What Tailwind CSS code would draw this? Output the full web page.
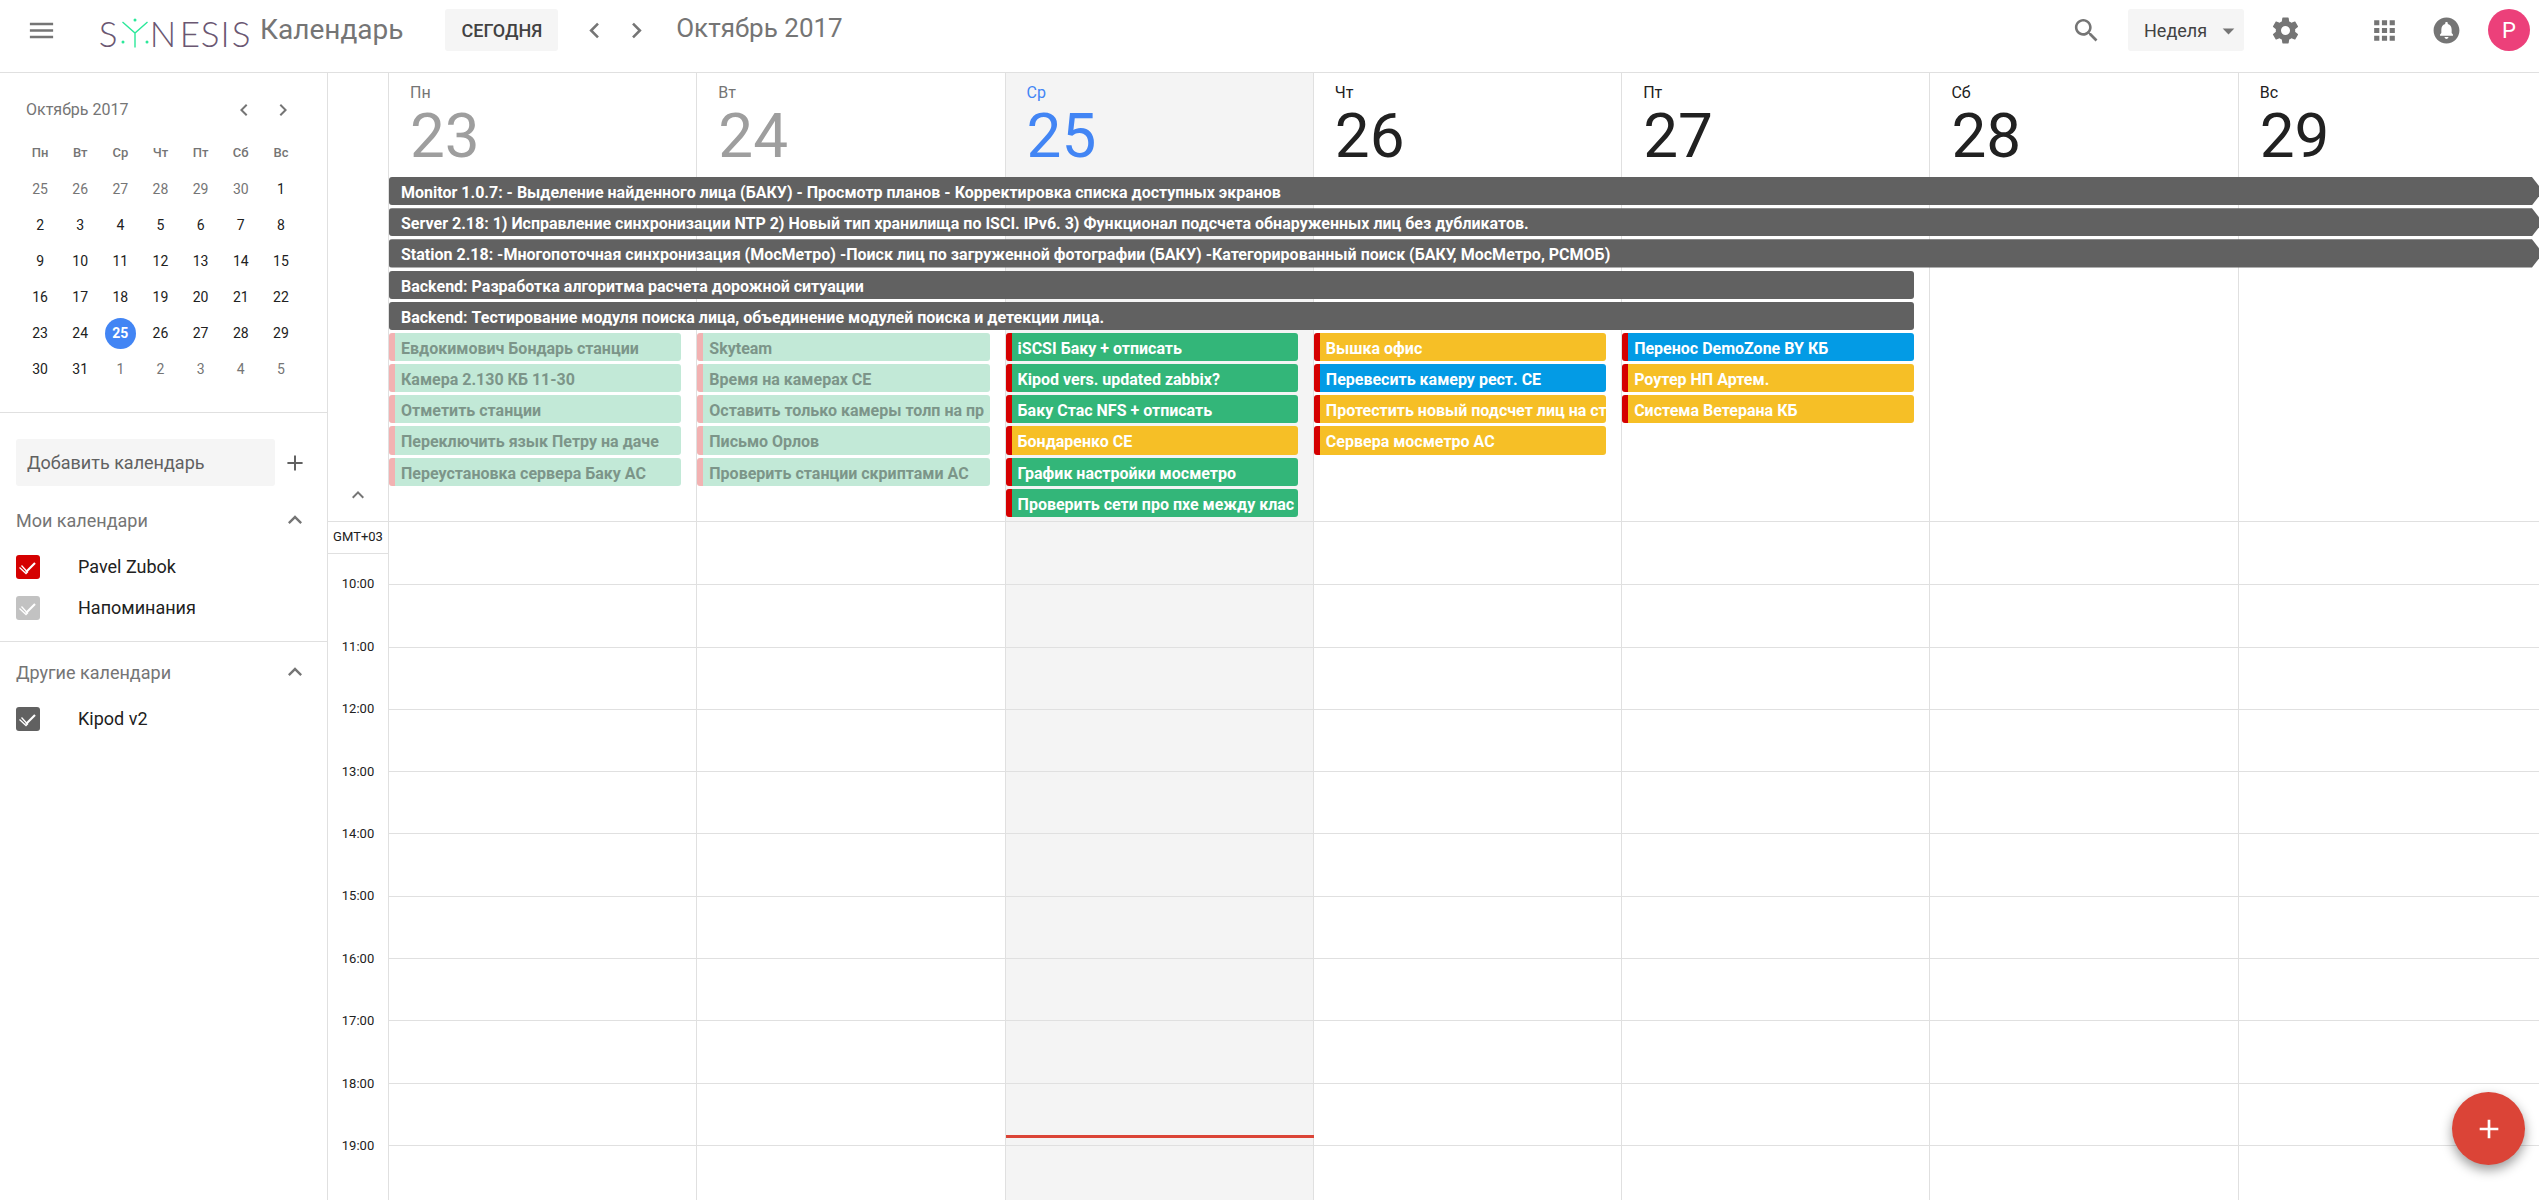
<!DOCTYPE html>
<html lang="ru">
<head>
    <meta charset="UTF-8">
    <meta name="viewport" content="width=device-width, initial-scale=1.0">
    <title>Synesis Календарь</title>
    <script src="https://cdn.jsdelivr.net/npm/@tailwindcss/browser@4"></script>
</head>
<body class="bg-white font-[Roboto,sans-serif] text-[#212121]">
    <div class="flex h-screen flex-col overflow-hidden">
        <!-- Header -->
        <header class="flex h-[73px] shrink-0 items-start border-b border-[#e0e0e0] pt-[9px] pr-[9px] text-[#757575]">
            <button aria-label="Меню" class="ml-[26px] flex h-[42px] items-center">
                <svg class="size-[31px]" viewBox="0 0 24 24" fill="currentColor"><path d="M3 18h18v-2H3v2zm0-5h18v-2H3v2zm0-7v2h18V6H3z"/></svg>
            </button>
            <a href="#" class="ml-[38px] flex h-[42px] items-center">
                <svg class="h-[42px] w-[156px] overflow-visible" viewBox="0 0 156 42" role="img" aria-label="Synesis">
                    <g fill="#6a5772" font-family="Lato, sans-serif" font-weight="300" font-size="35" text-anchor="middle">
                        <text x="13" y="38">S</text>
                        <text x="68" y="38">N</text>
                        <text x="95" y="38">E</text>
                        <text x="115" y="38">S</text>
                        <text x="130" y="38">I</text>
                        <text x="146" y="38">S</text>
                    </g>
                    <path d="M27.500 13L40 24l12.500-11M40 24v14.500" fill="none" stroke="#2be89a" stroke-width="1.4"/>
                    <g fill="#2be89a"><circle cx="40" cy="11" r="1.5"/><circle cx="28" cy="33" r="1.5"/><circle cx="52" cy="33" r="1.5"/></g>
                </svg>
                <span class="ml-[9px] text-[28px] leading-[42px]">Календарь</span>
            </a>
            <button class="ml-[42px] h-[42px] rounded-[3px] bg-[#f5f5f5] px-4 text-[18px] font-medium text-[#424242]">СЕГОДНЯ</button>
            <button aria-label="Предыдущая неделя" class="ml-[21px] flex h-[42px] items-center">
                <svg class="size-[31px]" viewBox="0 0 24 24" fill="currentColor"><path d="M15.41 7.41L14 6l-6 6 6 6 1.41-1.41L10.83 12z"/></svg>
            </button>
            <button aria-label="Следующая неделя" class="ml-[11px] flex h-[42px] items-center">
                <svg class="size-[31px]" viewBox="0 0 24 24" fill="currentColor"><path d="M10 6L8.59 7.41 13.17 12l-4.58 4.59L10 18l6-6z"/></svg>
            </button>
            <h1 class="ml-6 text-[26px] leading-[38px]">Октябрь 2017</h1>

            <div class="ml-auto flex items-center">
                <button aria-label="Поиск">
                    <svg class="size-[31px]" viewBox="0 0 24 24" fill="currentColor"><path d="M15.5 14h-.79l-.28-.27C15.41 12.59 16 11.11 16 9.5 16 5.91 13.09 3 9.5 3S3 5.91 3 9.5 5.91 16 9.5 16c1.61 0 3.09-.59 4.23-1.57l.27.28v.79l5 4.99L20.49 19l-4.99-5zm-6 0C7.01 14 5 11.99 5 9.5S7.01 5 9.5 5 14 7.01 14 9.5 11.99 14 9.5 14z"/></svg>
                </button>
                <div class="relative ml-[26px]">
                    <select aria-label="Вид" class="h-[42px] w-[116px] appearance-none rounded-[3px] bg-[#f5f5f5] pl-4 text-[18px] text-[#424242]">
                        <option>Неделя</option>
                    </select>
                    <svg class="pointer-events-none absolute top-[6px] right-0 size-[31px]" viewBox="0 0 24 24" fill="currentColor"><path d="M7.5 10.5l4.5 4.5 4.5-4.5z"/></svg>
                </div>
                <button aria-label="Настройки" class="ml-[26px]">
                    <svg class="size-[31px]" viewBox="0 0 24 24" fill="currentColor"><path d="M19.43 12.98c.04-.32.07-.64.07-.98s-.03-.66-.07-.98l2.11-1.65c.19-.15.24-.42.12-.64l-2-3.46c-.12-.22-.39-.3-.61-.22l-2.49 1c-.52-.4-1.08-.73-1.69-.98l-.38-2.65C14.46 2.18 14.25 2 14 2h-4c-.25 0-.46.18-.49.42l-.38 2.65c-.61.25-1.17.59-1.69.98l-2.49-1c-.23-.09-.49 0-.61.22l-2 3.46c-.13.22-.07.49.12.64l2.11 1.65c-.04.32-.07.65-.07.98s.03.66.07.98l-2.11 1.65c-.19.15-.24.42-.12.64l2 3.46c.12.22.39.3.61.22l2.49-1c.52.4 1.08.73 1.69.98l.38 2.65c.03.24.24.42.49.42h4c.25 0 .46-.18.49-.42l.38-2.65c.61-.25 1.17-.59 1.69-.98l2.49 1c.23.09.49 0 .61-.22l2-3.46c.12-.22.07-.49-.12-.64l-2.11-1.65zM12 15.5c-1.93 0-3.5-1.57-3.5-3.5s1.57-3.5 3.5-3.5 3.5 1.57 3.5 3.5-1.57 3.5-3.5 3.5z"/></svg>
                </button>
                <button aria-label="Приложения" class="ml-[68px]">
                    <svg class="size-[31px]" viewBox="0 0 24 24" fill="currentColor"><path d="M4 8h4V4H4v4zm6 12h4v-4h-4v4zm-6 0h4v-4H4v4zm0-6h4v-4H4v4zm6 0h4v-4h-4v4zm6-10v4h4V4h-4zm-6 4h4V4h-4v4zm6 6h4v-4h-4v4zm0 6h4v-4h-4v4z"/></svg>
                </button>
                <button aria-label="Уведомления" class="ml-[31px]">
                    <svg class="size-[31px]" viewBox="0 0 24 24" fill="currentColor"><path d="M12 2C6.480 2 2 6.480 2 12s4.480 10 10 10 10-4.480 10-10S17.520 2 12 2zm0 16.500c-.83 0-1.500-.67-1.500-1.500h3c0 .83-.67 1.500-1.500 1.500zm5-2.500H7v-1l1-1v-2.610C8 9.270 9.030 7.470 11 7v-.500c0-.57.430-1 1-1s1 .430 1 1V7c1.970.470 3 2.280 3 4.390V14l1 1v1z"/></svg>
                </button>
                <button aria-label="Аккаунт" class="ml-[26px] size-[42px] rounded-full bg-[#ec407a] text-[22px] text-white">P</button>
            </div>
        </header>

        <div class="flex min-h-0 flex-1">
            <!-- Sidebar -->
            <aside class="w-[328px] shrink-0 border-r border-[#e0e0e0] text-[18px]">
                <div class="h-[340px] border-b border-[#e0e0e0] pt-[21px]">
                    <div class="flex h-[31px] items-center pr-8 pl-[26px] text-[#757575]">
                        <h2 class="text-[16px]">Октябрь 2017</h2>
                        <button aria-label="Предыдущий месяц" class="ml-auto">
                            <svg class="size-6" viewBox="0 0 24 24" fill="currentColor"><path d="M15.41 7.41L14 6l-6 6 6 6 1.41-1.41L10.83 12z"/></svg>
                        </button>
                        <button aria-label="Следующий месяц" class="ml-[15px]">
                            <svg class="size-6" viewBox="0 0 24 24" fill="currentColor"><path d="M10 6L8.59 7.41 13.17 12l-4.58 4.59L10 18l6-6z"/></svg>
                        </button>
                    </div>
                    <table class="mt-[10px] ml-5 w-[281px] table-fixed text-center text-[14px]">
                        <thead id="miniHead" class="text-[13px] text-[#757575]"></thead>
                        <tbody id="miniBody"></tbody>
                    </table>
                </div>

                <div class="border-b border-[#e0e0e0] pt-[26px] pb-[13px]">
                    <div class="flex items-center pr-[18px] pl-4">
                        <input type="text" aria-label="Добавить календарь" placeholder="Добавить календарь" class="h-[47px] w-[259px] rounded-[3px] bg-[#f5f5f5] px-[11px] text-[18px] placeholder:text-[#616161]">
                        <button aria-label="Добавить" class="ml-auto text-[#616161]">
                            <svg class="size-7" viewBox="0 0 24 24" fill="none" stroke="currentColor" stroke-width="1.700"><path d="M12 5.500v13M5.500 12h13"/></svg>
                        </button>
                    </div>
                    <div class="mt-[22px] flex h-6 items-center pr-[18px] pl-4 text-[#757575]">
                        <h3>Мои календари</h3>
                        <button aria-label="Свернуть" class="ml-auto">
                            <svg class="size-7" viewBox="0 0 24 24" fill="currentColor"><path d="M12 8l-6 6 1.41 1.41L12 10.83l4.59 4.58L18 14z"/></svg>
                        </button>
                    </div>
                    <label class="mt-[14px] flex h-[41px] items-center pl-4">
                        <input type="checkbox" checked class="sr-only">
                        <span class="size-6 rounded-[3px] bg-[#d50000] text-white"><svg class="size-6" viewBox="0 0 24 24" fill="none" stroke="currentColor"><path stroke-width="2.200" d="M10 17L19 8"/><path stroke-width="1.300" d="M3.500 12.500l6.500 6 2-2M5.500 10.500l5 5.500"/></svg></span>
                        <span class="ml-[38px]">Pavel Zubok</span>
                    </label>
                    <label class="flex h-[41px] items-center pl-4">
                        <input type="checkbox" checked class="sr-only">
                        <span class="size-6 rounded-[3px] bg-[#c2c2c2] text-white"><svg class="size-6" viewBox="0 0 24 24" fill="none" stroke="currentColor"><path stroke-width="2.200" d="M10 17L19 8"/><path stroke-width="1.300" d="M3.500 12.500l6.500 6 2-2M5.500 10.500l5 5.500"/></svg></span>
                        <span class="ml-[38px]">Напоминания</span>
                    </label>
                </div>

                <div class="pt-[18px]">
                    <div class="flex h-6 items-center pr-[18px] pl-4 text-[#757575]">
                        <h3>Другие календари</h3>
                        <button aria-label="Свернуть" class="ml-auto">
                            <svg class="size-7" viewBox="0 0 24 24" fill="currentColor"><path d="M12 8l-6 6 1.41 1.41L12 10.83l4.59 4.58L18 14z"/></svg>
                        </button>
                    </div>
                    <label class="mt-[14px] flex h-[41px] items-center pl-4">
                        <input type="checkbox" checked class="sr-only">
                        <span class="size-6 rounded-[3px] bg-[#616161] text-white"><svg class="size-6" viewBox="0 0 24 24" fill="none" stroke="currentColor"><path stroke-width="2.200" d="M10 17L19 8"/><path stroke-width="1.300" d="M3.500 12.500l6.500 6 2-2M5.500 10.500l5 5.500"/></svg></span>
                        <span class="ml-[38px]">Kipod v2</span>
                    </label>
                </div>
            </aside>

            <!-- Time gutter -->
            <div class="flex w-[61px] shrink-0 flex-col overflow-hidden border-r border-[#e0e0e0] text-center text-[13px]">
                <div class="flex h-[449px] shrink-0 items-end justify-center border-b border-[#e0e0e0] pb-[14px] text-[#757575]">
                    <button aria-label="Свернуть"><svg class="size-6" viewBox="0 0 24 24" fill="currentColor"><path d="M12 8l-6 6 1.41 1.41L12 10.83l4.59 4.58L18 14z"/></svg></button>
                </div>
                <div class="h-8 shrink-0 border-b border-[#e0e0e0] leading-[30px]">GMT+03</div>
                <div id="hourLabels" class="grid h-[624px] shrink-0 auto-rows-fr"></div>
            </div>

            <!-- Week -->
            <main class="grid min-w-0 flex-1 overflow-hidden">
                <!-- Day columns -->
                <div id="dayColumns" class="col-start-1 row-start-1 -mr-2 grid grid-cols-7"></div>

                <!-- All-day events and hour lines -->
                <div class="col-start-1 row-start-1 -mr-2 flex min-w-0 flex-col pt-[104px]">
                    <div class="h-[345px] shrink-0 border-b border-[#e0e0e0]">
                        <div id="allDay" class="grid h-[340px] grid-cols-7 grid-rows-11 gap-y-[3px]"></div>
                    </div>
                    <div class="relative">
                        <div id="hourLines" class="grid h-[624px] auto-rows-fr pt-px"></div>
                        <div id="nowLine" class="absolute h-[3px] bg-[#db4437]"></div>
                    </div>
                </div>
            </main>
        </div>
    </div>

    <button aria-label="Создать" class="fixed right-[14px] bottom-[35px] flex size-[73px] items-center justify-center rounded-full bg-[#db4437] text-white shadow-[0_5px_12px_rgba(0,0,0,0.4)]">
        <svg class="size-[32px]" viewBox="0 0 24 24" fill="currentColor"><path d="M19 13h-6v6h-2v-6H5v-2h6V5h2v6h6v2z"/></svg>
    </button>

    <script>
        const dayNames = ['Пн', 'Вт', 'Ср', 'Чт', 'Пт', 'Сб', 'Вс'];
        const today = 25;
        const weekStart = 23;
        const firstHour = 10;
        const hourCount = 10;
        const now = 18 + 49 / 60;

        // Events that run over several days, starting on Monday
        const longEvents = [
            { title: 'Monitor 1.0.7: - Выделение найденного лица (БАКУ) - Просмотр планов - Корректировка списка доступных экранов', days: 7 },
            { title: 'Server 2.18: 1) Исправление синхронизации NTP 2) Новый тип хранилища по ISCI. IPv6. 3) Функционал подсчета обнаруженных лиц без дубликатов.', days: 7 },
            { title: 'Station 2.18: -Многопоточная синхронизация (МосМетро) -Поиск лиц по загруженной фотографии (БАКУ) -Категорированный поиск (БАКУ, МосМетро, РСМОБ)', days: 7 },
            { title: 'Backend: Разработка алгоритма расчета дорожной ситуации', days: 5 },
            { title: 'Backend: Тестирование модуля поиска лица, объединение модулей поиска и детекции лица.', days: 5 }
        ];

        const dayEvents = [
            [['past', 'Евдокимович Бондарь станции'], ['past', 'Камера 2.130 КБ 11-30'], ['past', 'Отметить станции'], ['past', 'Переключить язык Петру на даче'], ['past', 'Переустановка сервера Баку АС']],
            [['past', 'Skyteam'], ['past', 'Время на камерах СЕ'], ['past', 'Оставить только камеры толп на пр'], ['past', 'Письмо Орлов'], ['past', 'Проверить станции скриптами АС']],
            [['green', 'iSCSI Баку + отписать'], ['green', 'Kipod vers. updated zabbix?'], ['green', 'Баку Стас NFS + отписать'], ['yellow', 'Бондаренко СЕ'], ['green', 'График настройки мосметро'], ['green', 'Проверить сети про пхе между клас']],
            [['yellow', 'Вышка офис'], ['blue', 'Перевесить камеру рест. СЕ'], ['yellow', 'Протестить новый подсчет лиц на ст'], ['yellow', 'Сервера мосметро АС']],
            [['blue', 'Перенос DemoZone BY КБ'], ['yellow', 'Роутер НП Артем.'], ['yellow', 'Система Ветерана КБ']]
        ];

        const eventColors = {
            past: 'border-[#f2b2b2] bg-[#c2e9d7] text-[#7c9589]',
            green: 'border-[#d50000] bg-[#33b679] text-white',
            yellow: 'border-[#d50000] bg-[#f6bf26] text-white',
            blue: 'border-[#d50000] bg-[#039be5] text-white'
        };

        function renderMiniCalendar() {
            document.getElementById('miniHead').innerHTML = `<tr class="h-9">${dayNames.map(d => `<th class="font-medium">${d}</th>`).join('')}</tr>`;
            let rows = '';
            for (let week = 0; week < 6; week++) {
                rows += '<tr class="h-9">';
                for (let i = 0; i < 7; i++) {
                    const n = week * 7 + i - 5;
                    const outside = n < 1 || n > 31;
                    const label = n < 1 ? 30 + n : n > 31 ? n - 31 : n;
                    if (n === today) {
                        rows += `<td><span class="mx-auto flex size-[31px] items-center justify-center rounded-full bg-[#4285f4] font-bold text-white">${label}</span></td>`;
                    } else {
                        rows += `<td class="${outside ? 'text-[#757575]' : 'text-[#212121]'}">${label}</td>`;
                    }
                }
                rows += '</tr>';
            }
            document.getElementById('miniBody').innerHTML = rows;
        }

        function renderDays() {
            document.getElementById('dayColumns').innerHTML = dayNames.map((name, i) => {
                const date = weekStart + i;
                const nameColor = date < today ? 'text-[#757575]' : date === today ? 'text-[#4285f4]' : 'text-[#212121]';
                const dateColor = date < today ? 'text-[#9e9e9e]' : date === today ? 'text-[#4285f4]' : 'text-[#212121]';
                return `
                    <div class="border-r border-[#e0e0e0] pt-[10px] pl-[21px] ${date === today ? 'bg-[#f4f4f4]' : ''}">
                        <div class="text-[16px] leading-5 ${nameColor}">${name}</div>
                        <div class="text-[62px] leading-[66px] ${dateColor}">${date}</div>
                    </div>`;
            }).join('');
        }

        function renderEvents() {
            let html = longEvents.map((e, row) => `
                <a href="#" style="grid-area: ${row + 1} / 1 / auto / span ${e.days}" class="min-w-0 overflow-hidden bg-[#616161] px-3 text-[16px] leading-8 font-bold whitespace-nowrap text-white ${e.days === 7 ? 'mr-1 rounded-l-[3px] [clip-path:polygon(0_0,calc(100%-11px)_0,100%_50%,calc(100%-11px)_100%,0_100%)]' : 'mr-4 rounded-[3px]'}">${e.title}</a>`).join('');
            dayEvents.forEach((events, day) => {
                events.forEach(([color, title], i) => {
                    html += `
                        <a href="#" style="grid-area: ${longEvents.length + i + 1} / ${day + 1}" class="mr-4 min-w-0 overflow-hidden rounded-[3px] border-l-[6px] pl-[6px] text-[16px] leading-8 font-bold whitespace-nowrap ${eventColors[color]}">${title}</a>`;
                });
            });
            document.getElementById('allDay').innerHTML = html;
        }

        function renderHours() {
            const hours = Array.from({ length: hourCount }, (_, i) => firstHour + i);
            document.getElementById('hourLabels').innerHTML = hours.map(h => `<div class="flex items-center justify-center pb-0.5">${h}:00</div>`).join('');
            document.getElementById('hourLines').innerHTML = hours.map(() => '<div class="border-b border-[#e0e0e0]"></div>').join('');

            const line = document.getElementById('nowLine');
            const day = today - weekStart;
            line.style.left = `${day / 7 * 100}%`;
            line.style.width = `${100 / 7}%`;
            line.style.top = `${(now - firstHour + 1) / hourCount * 100}%`;
        }

        renderMiniCalendar();
        renderDays();
        renderEvents();
        renderHours();
    </script>
</body>
</html>
